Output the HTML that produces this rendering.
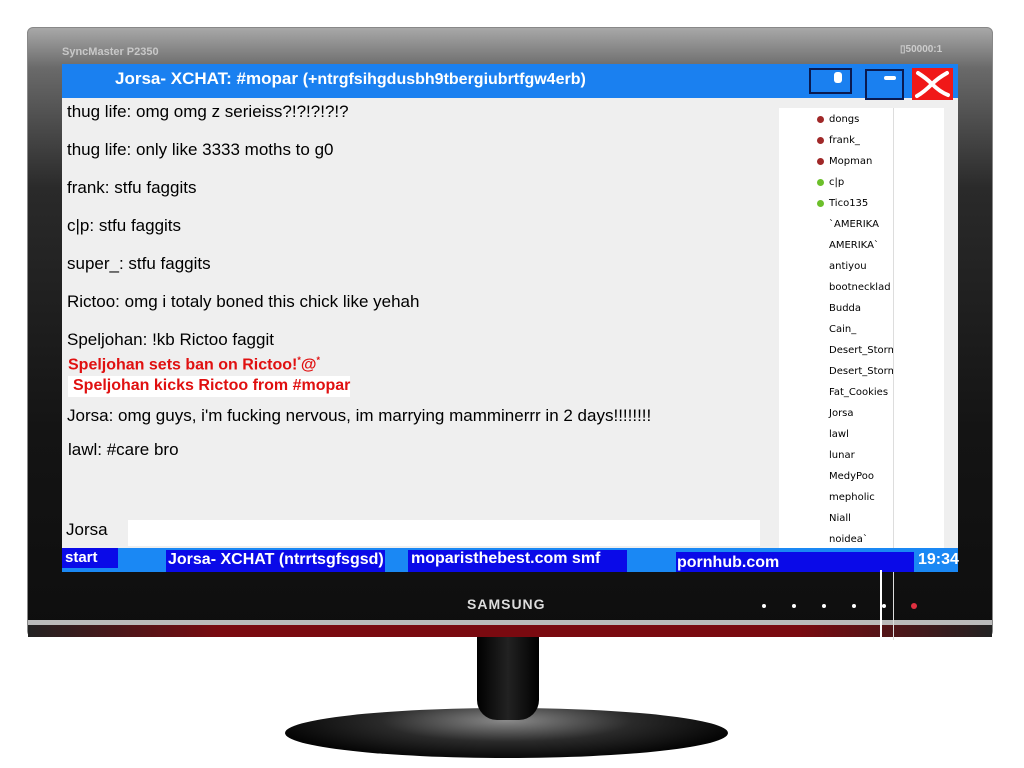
<!DOCTYPE html>
<html><head><style>
*{margin:0;padding:0;box-sizing:border-box}
body{width:1024px;height:768px;background:#fff;position:relative;overflow:hidden;font-family:"Liberation Sans",Arial,sans-serif}
.a{position:absolute}
.bez{left:27px;top:27px;width:966px;height:610px;border-radius:6px;background:linear-gradient(#a8a8a8 0px,#6a6a6a 40px,#2a2a2a 160px,#141414 400px,#0e0e0e 610px);border:1px solid #888}
.msg{position:absolute;left:67px;font-size:17px;color:#000;white-space:nowrap}
.red{color:#e01010;font-weight:bold;font-size:16px}
.u{position:absolute;left:829px;font-family:"DejaVu Sans",sans-serif;font-size:10px;color:#000;white-space:nowrap}
.dot{position:absolute;left:817px;width:7px;height:7px;border-radius:50%}
.tb{position:absolute;color:#fff;font-weight:bold;font-size:16px;white-space:nowrap}
</style></head><body>
<!-- stand -->
<div class="a" style="left:285px;top:708px;width:443px;height:50px;border-radius:50%;background:radial-gradient(ellipse at 50% 25%,#8a8a8a,#2a2a2a 40%,#050505 75%)"></div>
<div class="a" style="left:477px;top:630px;width:62px;height:90px;background:linear-gradient(90deg,#000,#222 50%,#000);border-radius:0 0 20px 20px"></div>
<div class="bez a"></div>
<div class="a" style="left:62px;top:46px;font-size:11px;font-weight:bold;color:#c8c8c8">SyncMaster P2350</div>
<div class="a" style="left:900px;top:44px;font-size:10px;font-weight:bold;color:#ccc">▯50000:1</div>
<div class="a" style="left:28px;top:620px;width:964px;height:5px;background:#bbb"></div>
<div class="a" style="left:28px;top:625px;width:964px;height:12px;background:linear-gradient(90deg,#222,#7a0a10 20%,#7a0a10 80%,#222)"></div>
<div class="a" style="left:467px;top:596px;font-size:14px;font-weight:bold;color:#ddd;letter-spacing:1px">SAMSUNG</div>
<div class="a" style="left:762px;top:604px;width:4px;height:4px;border-radius:50%;background:#fff;box-shadow:30px 0 #fff,60px 0 #fff,90px 0 #fff,120px 0 #fff"></div>
<div class="a" style="left:911px;top:603px;width:6px;height:6px;border-radius:50%;background:#e03040"></div>
<!-- screen -->
<div class="a" style="left:62px;top:64px;width:896px;height:508px;background:#efefef"></div>
<div class="a" style="left:62px;top:64px;width:896px;height:34px;background:#1a80f0"></div>
<div class="tb" style="left:115px;top:69px;font-size:17px">Jorsa- XCHAT: #mopar <span style="font-size:16px">(+ntrgfsihgdusbh9tbergiubrtfgw4erb)</span></div>
<div class="a" style="left:809px;top:68px;width:43px;height:26px;border:2px solid #0a1a50"></div>
<div class="a" style="left:834px;top:72px;width:8px;height:11px;background:#fff;border-radius:3px"></div>
<div class="a" style="left:865px;top:69px;width:39px;height:31px;border:2px solid #0a1a50"></div>
<div class="a" style="left:884px;top:76px;width:12px;height:4px;background:#fff;border-radius:2px"></div>
<div class="a" style="left:912px;top:68px;width:41px;height:32px;background:#f01818"></div>
<svg class="a" style="left:912px;top:68px" width="41" height="32"><path d="M6 5 Q14 10 20 16 Q28 24 36 27 M35 5 Q26 10 20 16 Q12 24 5 28" stroke="#fff" stroke-width="4" fill="none" stroke-linecap="round"/></svg>
<div class="msg" style="top:102px">thug life: omg omg z serieiss?!?!?!?!?</div>
<div class="msg" style="top:140px">thug life: only like 3333 moths to g0</div>
<div class="msg" style="top:178px">frank: stfu faggits</div>
<div class="msg" style="top:216px">c|p: stfu faggits</div>
<div class="msg" style="top:254px">super_: stfu faggits</div>
<div class="msg" style="top:292px">Rictoo: omg i totaly boned this chick like yehah</div>
<div class="msg" style="top:330px">Speljohan: !kb Rictoo faggit</div>
<div class="msg red" style="top:355px;left:68px">Speljohan sets ban on Rictoo!<sup style="font-size:9px">*</sup>@<sup style="font-size:9px">*</sup></div>
<div class="a" style="left:68px;top:376px;width:282px;height:21px;background:#fff"></div>
<div class="msg red" style="top:377px;left:73px">Speljohan kicks Rictoo from #mopar</div>
<div class="msg" style="top:406px">Jorsa: omg guys, i'm fucking nervous, im marrying mamminerrr in 2 days!!!!!!!!</div>
<div class="msg" style="top:440px;left:68px">lawl: #care bro</div>
<div class="msg" style="top:520px;left:66px">Jorsa</div>
<div class="a" style="left:128px;top:520px;width:632px;height:26px;background:#fff"></div>
<!-- userlist -->
<div class="a" style="left:779px;top:108px;width:165px;height:440px;background:#fff"></div>
<div class="a" style="left:893px;top:108px;width:1px;height:532px;background:#ddd"></div>
<div class="dot" style="top:116px;background:#a02828"></div>
<div class="dot" style="top:137px;background:#a02828"></div>
<div class="dot" style="top:158px;background:#a02828"></div>
<div class="dot" style="top:179px;background:#6cbf2a"></div>
<div class="dot" style="top:200px;background:#6cbf2a"></div>
<div class="u" style="top:114px">dongs</div>
<div class="u" style="top:135px">frank_</div>
<div class="u" style="top:156px">Mopman</div>
<div class="u" style="top:177px">c|p</div>
<div class="u" style="top:198px">Tico135</div>
<div class="u" style="top:219px">`AMERIKA</div>
<div class="u" style="top:240px">AMERIKA`</div>
<div class="u" style="top:261px">antiyou</div>
<div class="u" style="top:282px">bootnecklad</div>
<div class="u" style="top:303px">Budda</div>
<div class="u" style="top:324px">Cain_</div>
<div class="u" style="top:345px;width:64px;overflow:hidden">Desert_Storm</div>
<div class="u" style="top:366px;width:64px;overflow:hidden">Desert_Storm</div>
<div class="u" style="top:387px">Fat_Cookies</div>
<div class="u" style="top:408px">Jorsa</div>
<div class="u" style="top:429px">lawl</div>
<div class="u" style="top:450px">lunar</div>
<div class="u" style="top:471px">MedyPoo</div>
<div class="u" style="top:492px">mepholic</div>
<div class="u" style="top:513px">Niall</div>
<div class="u" style="top:534px">noidea`</div>
<!-- taskbar -->
<div class="a" style="left:62px;top:548px;width:896px;height:24px;background:#1a88f4"></div>
<div class="a" style="left:62px;top:548px;width:56px;height:20px;background:#0a0ae8"></div>
<div class="tb" style="left:65px;top:549px;font-size:15px">start</div>
<div class="a" style="left:166px;top:550px;width:219px;height:22px;background:#0a0ae8"></div>
<div class="tb" style="left:168px;top:551px">Jorsa- XCHAT (ntrrtsgfsgsd)</div>
<div class="a" style="left:408px;top:550px;width:219px;height:22px;background:#0a0ae8"></div>
<div class="tb" style="left:411px;top:550px">moparisthebest.com smf</div>
<div class="a" style="left:676px;top:552px;width:238px;height:20px;background:#0a0ae8"></div>
<div class="tb" style="left:677px;top:554px">pornhub.com</div>
<div class="tb" style="left:918px;top:551px">19:34</div>
<div class="a" style="left:880px;top:570px;width:2px;height:70px;background:#fff"></div>
</body></html>
